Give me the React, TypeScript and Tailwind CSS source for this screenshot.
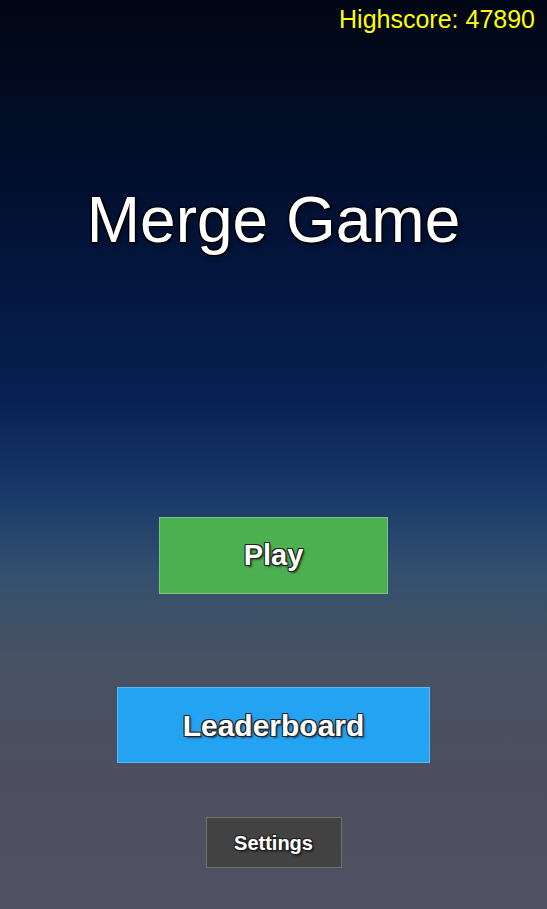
import React from "react";

export default function App() {
  const outline =
    "[text-shadow:-1px_-1px_0_#222,1px_-1px_0_#222,-1px_1px_0_#222,1px_1px_0_#222,2px_2px_2px_rgba(0,0,0,0.5)]";
  return (
    <div
      className="w-full h-[909px] flex flex-col items-center bg-[linear-gradient(to_bottom,#010614_0%,#021236_25%,#082153_44%,#1a3c6a_55%,#33506e_63%,#475263_72%,#4d4f5f_85%,#4f5061_100%)]"
      style={{ fontFamily: '"Liberation Sans", Arial, sans-serif' }}
    >
      <div className="w-full flex justify-end pr-3 pt-[7px]">
        <span className="text-[25px] leading-none text-[#ffff00]">Highscore: 47890</span>
      </div>
      <h1 className="mt-[156px] text-[64px] leading-none text-white font-normal [text-shadow:-1px_-1px_0_#000,1px_-1px_0_#000,-1px_1px_0_#000,1px_1px_0_#000,0_0_2px_#000,2px_2px_4px_rgba(0,0,0,0.5)]">
        Merge Game
      </h1>
      <button
        className={`mt-[265px] w-[229px] h-[77px] flex items-center justify-center bg-[#4caf50] border border-white/25 text-white font-bold text-[29px] ${outline}`}
      >
        Play
      </button>
      <button
        className={`mt-[93px] w-[313px] h-[76px] flex items-center justify-center bg-[#25a3f3] border border-white/25 text-white font-bold text-[30px] ${outline}`}
      >
        Leaderboard
      </button>
      <button
        className={`mt-[54px] w-[136px] h-[51px] flex items-center justify-center bg-[#424242] border border-white/25 text-white font-bold text-[20px] ${outline}`}
      >
        Settings
      </button>
    </div>
  );
}
